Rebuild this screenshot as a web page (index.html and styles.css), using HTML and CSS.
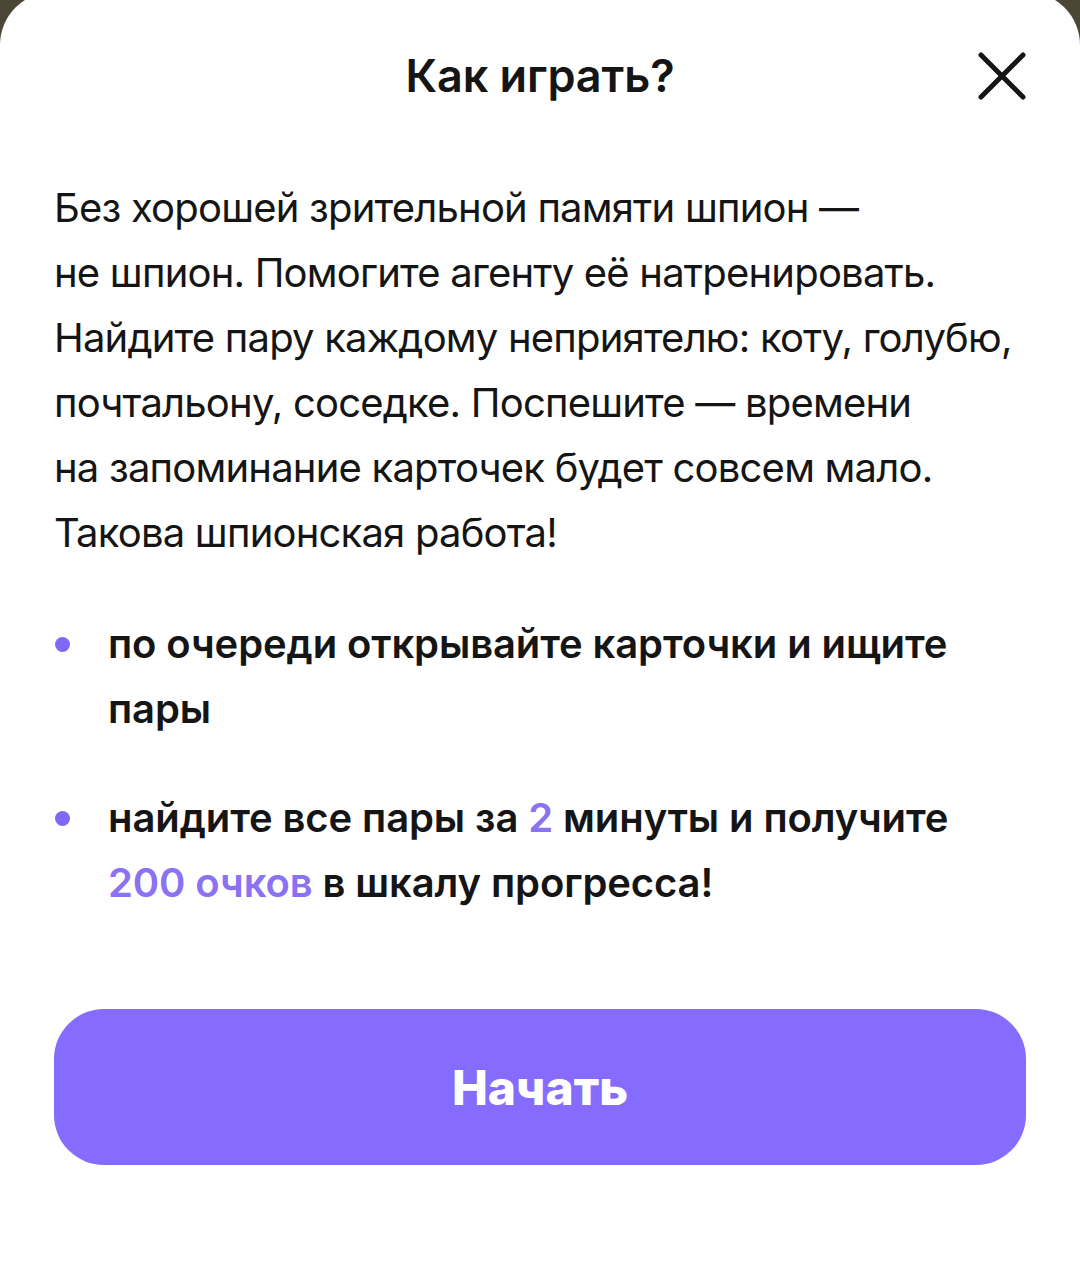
FILE: index.html
```html
<!DOCTYPE html>
<html lang="ru">
  <head>
    <meta charset="utf-8">
    <meta name="viewport" content="width=device-width, initial-scale=1">
    <title>Как играть?</title>
    <link rel="stylesheet" href="styles.css">
  </head>
  <body>
    <div class="sheet">
      <header class="sheet-head">
        <h1>Как играть?</h1>
        <button class="close" type="button" aria-label="Закрыть">
          <svg width="48" height="48" viewBox="0 0 48 48" fill="none" stroke="#161616" stroke-width="5" stroke-linecap="round">
            <path d="M3 3 L45 45 M45 3 L3 45"/>
          </svg>
        </button>
      </header>
      <p class="intro">Без хорошей зрительной памяти шпион —<br>не&nbsp;шпион. Помогите агенту её натренировать. Найдите пару каждому неприятелю: коту, голубю, почтальону, соседке. Поспешите — времени<br>на&nbsp;запоминание карточек будет совсем мало.<br>Такова шпионская работа!</p>
      <ul class="rules">
        <li>по очереди открывайте карточки и ищите пары</li>
        <li>найдите все пары за <span class="accent">2</span> минуты и получите <span class="accent">200 очков</span> в шкалу прогресса!</li>
      </ul>
      <button class="start" type="button">Начать</button>
    </div>
  </body>
</html>
```
FILE: styles.css
```css
html, body {
  margin: 0;
  height: 100%;
}

body {
  background: #4b4636;
  font-family: Inter, "Noto Sans", sans-serif;
  color: #151515;
  overflow: hidden;
}

.sheet {
  margin-top: -8px;
  min-height: calc(100% + 8px);
  background: #fff;
  border-radius: 53px 53px 0 0;
  padding: 0 54px;
  box-sizing: border-box;
}

.sheet-head {
  position: relative;
  padding-top: 50px;
  height: 133px;
  box-sizing: content-box;
  text-align: center;
}

.sheet-head h1 {
  margin: 0;
  font-size: 45px;
  font-weight: 600;
  line-height: 68px;
  letter-spacing: -0.1px;
}

.close {
  position: absolute;
  right: 0;
  top: 60px;
  padding: 0;
  border: 0;
  background: none;
  cursor: pointer;
}

.close svg {
  display: block;
}

.intro {
  margin: 0;
  font-size: 40px;
  line-height: 65px;
  letter-spacing: -0.8px;
}

.rules {
  list-style: none;
  margin: 46px 0 0;
  padding: 0;
}

.rules li {
  position: relative;
  padding-left: 54px;
  font-size: 40px;
  font-weight: 600;
  line-height: 65px;
  letter-spacing: -0.1px;
  margin-bottom: 44px;
}

.rules li:last-child {
  margin-bottom: 0;
}

.rules li::before {
  content: "";
  position: absolute;
  left: 1px;
  top: 26px;
  width: 15px;
  height: 15px;
  border-radius: 50%;
  background: #8067f6;
}

.accent {
  color: #8a72f3;
}

.start {
  display: block;
  width: 100%;
  height: 156px;
  margin-top: 94px;
  border: 0;
  border-radius: 50px;
  background: #866cfe;
  color: #fff;
  font-family: Inter, "Noto Sans", sans-serif;
  font-size: 48px;
  font-weight: 800;
  cursor: pointer;
}
```
